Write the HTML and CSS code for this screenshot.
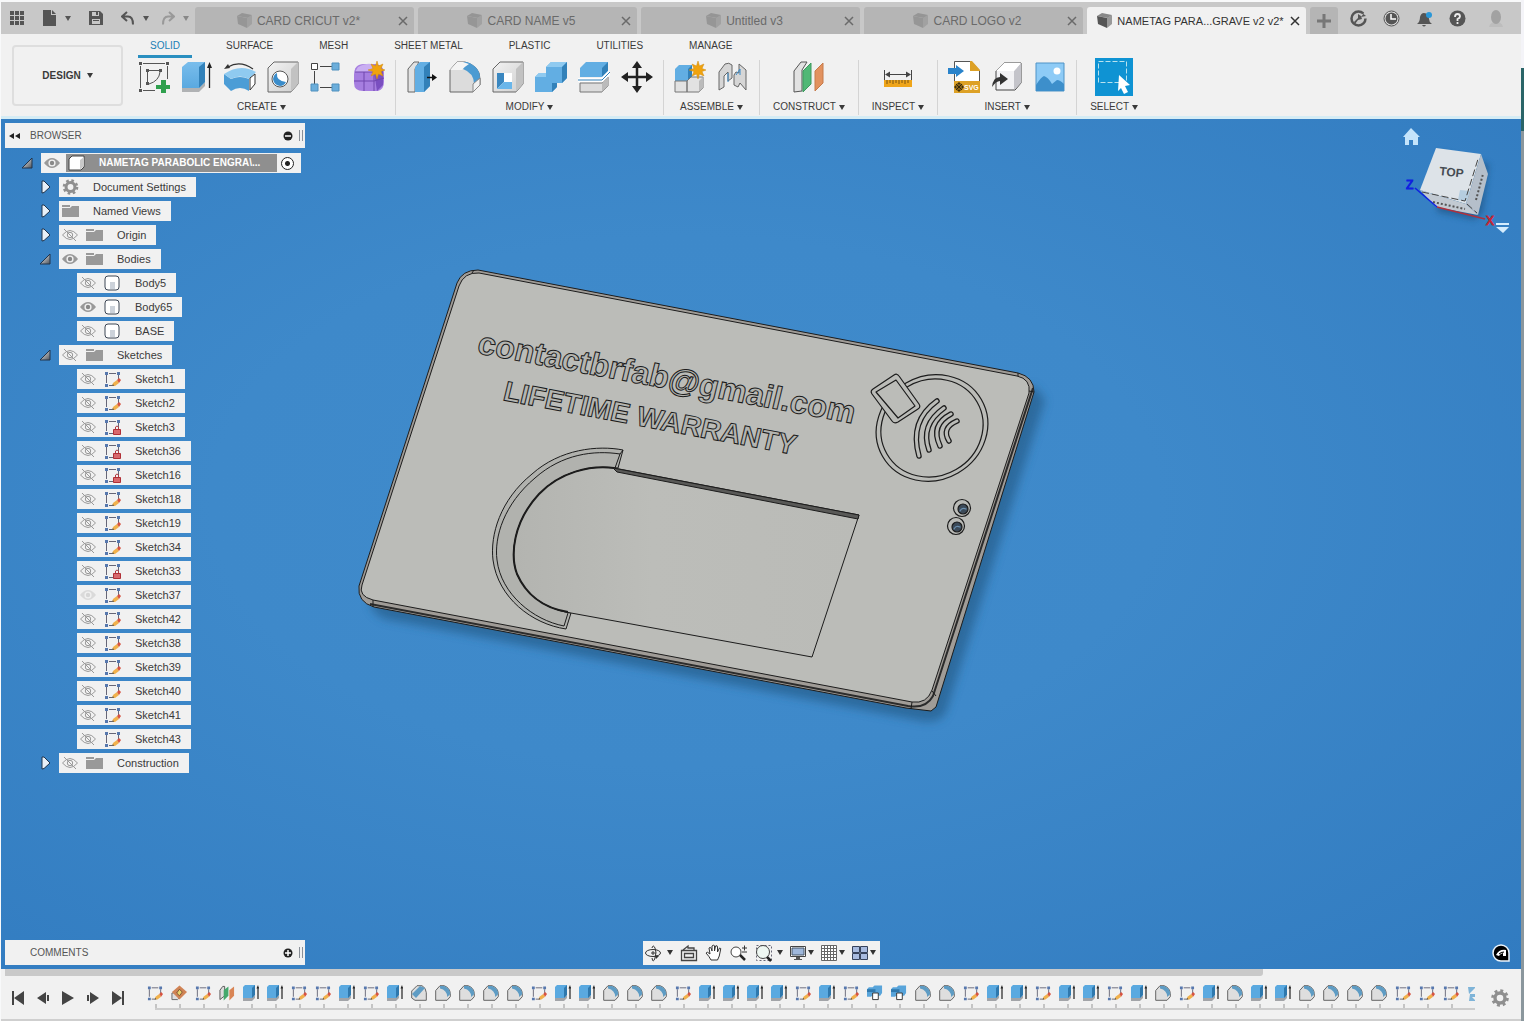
FILE: index.html
```html
<!DOCTYPE html>
<html lang="en">
<head>
<meta charset="utf-8">
<title>NAMETAG PARABOLIC ENGRAVE v2</title>
<link rel="stylesheet" href="styles.css">
</head>
<body>
<svg class="sprite" aria-hidden="true">
  <defs>
    <linearGradient id="steel" x1="0" y1="0" x2="1" y2="1"><stop offset="0" stop-color="#fff"/><stop offset="1" stop-color="#4a5058"/></linearGradient>
    <linearGradient id="blueFace" x1="0" y1="0" x2="0" y2="1"><stop offset="0" stop-color="#79bdec"/><stop offset="1" stop-color="#5aa9e0"/></linearGradient>
    <linearGradient id="grayFace" x1="0" y1="0" x2="1" y2="1"><stop offset="0" stop-color="#f2f2f2"/><stop offset="1" stop-color="#cfcfcf"/></linearGradient>
  </defs>
  <symbol id="cube" viewBox="0 0 16 16"><path d="M0 3 5 0l10 2-4 3z" fill="#888"/><path d="M0 3l10 2v10L1 11z" fill="currentColor"/><path d="M10 5l5-3v9l-5 4z" fill="#999"/></symbol>
  <symbol id="close" viewBox="0 0 10 10"><path d="M1 1l8 8M9 1 1 9" stroke="currentColor" stroke-width="1.5"/></symbol>
  <symbol id="caret" viewBox="0 0 6 5"><path d="M0 0h6L3 5z" fill="currentColor"/></symbol>
  <symbol id="eye" viewBox="0 0 16 14"><path d="M0 7Q8-3 16 7 8 17 0 7z" fill="#999"/><circle cx="8" cy="7" r="3.6" fill="#f1f1f1"/><circle cx="8" cy="7" r="2.2" fill="#888"/></symbol>
  <symbol id="eye-off" viewBox="0 0 16 14"><g fill="none" stroke="#999"><path d="M.5 7Q8-2 15.500 7 8 16 .5 7z"/><circle cx="8" cy="7" r="2.700"/><path d="M2 1l12 12"/></g></symbol>
  <symbol id="folder" viewBox="0 0 17 14"><path d="M0 1h8v2H0zM0 4h8l2-2h7v11H0z" fill="#999"/></symbol>
  <symbol id="gear" viewBox="0 0 18 18"><circle cx="9" cy="9" r="5" fill="none" stroke="#8f8f8f" stroke-width="3.4"/><circle cx="9" cy="9" r="7.300" fill="none" stroke="#8f8f8f" stroke-width="3" stroke-dasharray="2.870 2.870"/></symbol>
  <symbol id="body" viewBox="0 0 17 16"><path d="M1 4q0-3 3-3h8q3 0 3 3v8q0 3-3 3H4q-3 0-3-3z" fill="#fff" stroke="#3d4654"/><path d="M6 7h5v7H6z" fill="#ccd2da"/></symbol>
  <symbol id="comp" viewBox="0 0 17 16"><path d="M1 4l3-3h12v11l-3 3H1z" fill="#fff" stroke="#444"/><path d="M12 5v9h1l3-3V2z" fill="#c9c9c9"/></symbol>
  <symbol id="frame" viewBox="0 0 17 16"><path d="M2.500 4v8M5 2.500h7M14.500 4v5M5 14.500h4" stroke="#667" fill="none"/><path d="M1 1h3v3H1zM13 1h3v3h-3zM1 13h3v3H1z" fill="#5778ae"/></symbol>
  <symbol id="sketch" viewBox="0 0 17 16"><use href="#frame"/><path d="M8 15l1-3 4-3 2 3-4 3z" fill="#f1b14c"/><path d="M13 9l2-2 2 2-2 3z" fill="#d75340"/><path d="M8 15l1-2 1 2z" fill="#555"/></symbol>
  <symbol id="locked" viewBox="0 0 17 16"><use href="#frame"/><path d="M9.500 10.500h7v5h-7z" fill="#d8686c" stroke="#b02f36"/><path d="M11.500 10V8q1.500-2 3 0v2" fill="none" stroke="#b23a40"/></symbol>
  <symbol id="open" viewBox="0 0 12 12"><path d="M1 11 11 1v10z" fill="url(#steel)" stroke="#20344c"/></symbol>
  <symbol id="shut" viewBox="0 0 12 14"><path d="M3 1v12l2-.5L11 7 5 1z" fill="#e8f0f8" stroke="#20344c"/></symbol>

  <symbol id="t-extrude" viewBox="0 0 16 16"><path d="M0 12v4h9l3-3v-2z" fill="#a2a4a8"/><path d="M0 2l2-2h10v10l-3 3H0z" fill="#5aa9e0"/><path d="M9 3l3-3v10l-3 3z" fill="#2f78ad"/><path d="M15 14V2" stroke="#222" stroke-width="1.2"/><path d="M13.500 3.500 15 0l1 3.500z" fill="#222"/></symbol>
  <symbol id="t-fillet" viewBox="0 0 16 16"><path d="M.7 5.500 5 .7h4q6 2 6.300 8v3L12 15.300H.7z" fill="#dedede" stroke="#666"/><path d="M5 1h4q6 2 6.300 8l-3 3Q12 5 5 3.500z" fill="#5e9cc4"/></symbol>
  <symbol id="t-chamfer" viewBox="0 0 16 16"><path d="M.7 6 6 .7h5q4 2 4.300 7v7.600H4L.7 13z" fill="#dedede" stroke="#666"/><path d="M1 9 9 1l5 2-9 10z" fill="#5e9cc4"/></symbol>
  <symbol id="t-plane" viewBox="0 0 17 16"><path d="M1 5l3-4h2v10l-5 4z" fill="#ddd" stroke="#555"/><path d="M5 5l5-4v10l-5 5z" fill="#43a96b"/><path d="M11 5l5-4v10l-5 5z" fill="#d98555"/></symbol>
  <symbol id="t-decal" viewBox="0 0 17 16"><path d="M1 8v7h6l2-2-6-5z" fill="#ddd" stroke="#666"/><path d="M1 7 9 0l8 7-8 8z" fill="#d08355"/><path d="M6 8l3-4 3 3-3 4z" fill="#e8d26c" stroke="#7a5230"/></symbol>
  <symbol id="t-combine" viewBox="0 0 17 16"><path d="M0 4l2-2h4l2-2h8v8l-2 3H6L4 12H0z" fill="#58a4da"/><path d="M0 4h9v3H0z" fill="#2f78ad"/><path d="M6 8h6v7H6z" fill="#fff" stroke="#333"/></symbol>
  <symbol id="t-mirror" viewBox="0 0 16 16"><path d="M1 2h8L2 9zM3 9h6v3H5l4 4H2z" fill="#7fb4d8"/></symbol>

  <symbol id="i-sketch" viewBox="0 0 32 32"><g fill="none" stroke="#555"><path d="M2.500 5v22M5 2.500h22M29.500 5v13M5 29.500h12"/><path d="M9.500 11v10M11 9.500h10M22 11q-1 9-11 12"/></g><g fill="#555"><path d="M1 1h3v3H1zM28 1h3v3h-3zM1 28h3v3H1zM8 8h3v3H8zM21 8h3v3h-3zM8 21h3v3H8z"/></g><path d="M23 19h5v5h4v4h-4v4h-5v-4h-5v-4h5z" fill="#2fa04e"/></symbol>
  <symbol id="i-extrude" viewBox="0 0 32 32"><path d="M1 26v5h17l6-6v-4z" fill="#b0b2b4"/><path d="M1 24v3h17l6-6v-3z" fill="#f5f5f5"/><path d="M1 6l6-5h17v20l-6 6H1z" fill="url(#blueFace)"/><path d="M18 6l6-5v20l-6 6z" fill="#3281b9"/><path d="M28.500 27V4" stroke="#222" stroke-width="1.300"/><path d="M26 7l2.500-6L31 7z" fill="#222"/></symbol>
  <symbol id="i-revolve" viewBox="0 0 32 32"><path d="M0 13l7 5q9-4 18 0v12q-9-6-18 0l-7-7z" fill="#4c9dd6"/><path d="M0 13l7 5q9-5 18 0l7-7q-16-9-32 2z" fill="#8fcaf0"/><path d="M26 17l5-4v10l-5 6z" fill="#fff" stroke="#333"/><path d="M4 6q12-7 25 2" fill="none" stroke="#333" stroke-width="1.300"/><path d="M0 8l4-5 2 4z" fill="#333"/></symbol>
  <symbol id="i-hole" viewBox="0 0 32 32"><path d="M1 7l6-6h24v22l-7 8H1z" fill="url(#grayFace)" stroke="#666"/><path d="M24 8l7-7v22l-7 8z" fill="#c2c2c2"/><circle cx="13" cy="18" r="8" fill="#fff" stroke="#555"/><path d="M10 12q-1 8 9 9-2 4-6 4-6-1-7-7 1-5 4-6z" fill="#3a8cca"/></symbol>
  <symbol id="i-pattern" viewBox="0 0 32 32"><path d="M10 5.500h13M4.500 10v13M10 26.500h13" stroke="#444"/><path d="M1.500 2.500h6v6h-6z" fill="#fff" stroke="#444"/><path d="M22 2h7v7h-7zM1 23h7v7H1zM22 23h7v7h-7z" fill="#6caedb" stroke="#4e90be"/></symbol>
  <symbol id="i-form" viewBox="0 0 32 32"><path d="M1 14q0-11 10-11h12q8 2 8 9v9q0 7-6 9H10Q1 30 1 22z" fill="#a67ee0"/><path d="M5 6q14-7 18 1l-3 4H2z" fill="#c9aef2"/><path d="M21 11l9-2v15l-6 6z" fill="#7a4fc0"/><path d="M1 20h20l10-3M11 11v19M21 11v19M2 11h19" stroke="#7147ae" fill="none"/><use href="#star"/></symbol>
  <symbol id="star" viewBox="0 0 32 32"><path d="M24 0l1.500 5L30 3l-2 4.500 4 1.500-4 1.500 2 4.500-4.500-2L24 18l-1.500-5-4.500 2 2-4.500-5-1.500 5-1.500L18 3l4.500 2z" fill="#f0a30e" stroke="#cf8a10" stroke-width=".5"/></symbol>
  <symbol id="i-press" viewBox="0 0 32 32"><path d="M2 8l6-7h5L9 8v23H2z" fill="#e2e2e2" stroke="#666"/><path d="M9 6l5-5h10v24l-6 6H9z" fill="#62aee3"/><path d="M18 6l6-5v24l-6 6z" fill="#3281b9"/><path d="M21 16.500h7" stroke="#111" stroke-width="1.500"/><path d="M26 13l5 3.500-5 3.500z" fill="#111"/></symbol>
  <symbol id="i-fillet" viewBox="0 0 32 32"><path d="M1 9l7-8h8q15 4 15 17v6l-7 7H1z" fill="#dcdcdc" stroke="#666"/><path d="M14 1h4q13 5 13 16l-6 6Q25 12 14 8z" fill="#4c9bd2"/><path d="M24 23v8l7-7v-7z" fill="#f1f1f1" stroke="#888"/><path d="M1 9l7-8h6l6 2q-5 3-7 6z" fill="#f4f4f4"/></symbol>
  <symbol id="i-shell" viewBox="0 0 32 32"><path d="M1 8l7-7h23v22l-7 8H1z" fill="url(#grayFace)" stroke="#666"/><path d="M24 8l7-7v22l-7 8z" fill="#c2c2c2"/><path d="M5 12h15v16H5z" fill="#fff"/><path d="M5 12h7v9l-7 7z" fill="#3a87c0"/><path d="M5 28l7-7h8v7z" fill="#6ab6ea"/></symbol>
  <symbol id="i-combine" viewBox="0 0 32 32"><path d="M0 16l4-4h7V6l5-5h16v16l-5 5h-5v4l-5 5H0z" fill="#62aee3"/><path d="M11 6l5-5h16l-5 5zM0 16l4-4h7v4z" fill="#8fcaf0"/><path d="M27 6l5-5v16l-5 5zM17 22h5v4l-5 5z" fill="#3281b9"/></symbol>
  <symbol id="i-split" viewBox="0 0 32 32"><path d="M2 7l6-6h22v9l-6 6H2z" fill="#62aee3"/><path d="M24 7l6-6v9l-6 6z" fill="#3281b9"/><path d="M2 22h22l6-6v9l-6 6H2z" fill="#dcdcdc" stroke="#777"/><path d="M24 22l6-6v9l-6 6z" fill="#bbb"/><path d="M0 19h24l8-8" stroke="#fff" stroke-width="4" fill="none"/><path d="M0 19h24l8-8" stroke="#3281b9" fill="none"/></symbol>
  <symbol id="i-move" viewBox="0 0 32 32"><path d="M16 4v24M4 16h24" stroke="#222" stroke-width="2.500"/><path d="M16 0l5 7H11zM16 32l5-7H11zM0 16l7-5v10zM32 16l-7-5v10z" fill="#222"/></symbol>
  <symbol id="i-new" viewBox="0 0 32 32"><path d="M1 8l4-4h13v12l-4 4H1z" fill="#62aee3"/><path d="M14 8l4-4v12l-4 4z" fill="#3281b9"/><path d="M1 20h12v11H1zM13 20l4-4h12v11l-4 4H13z" fill="#e2e2e2" stroke="#777"/><path d="M25 20l4-4v11l-4 4z" fill="#bbb"/><use href="#star"/></symbol>
  <symbol id="i-joint" viewBox="0 0 32 32"><path d="M2 11 8 3q4-2 7 1v13l-4 3v-9l-4 4v11l-5 3z" fill="#d6d6d6" stroke="#666"/><path d="M29 9l-7-6v9l-3-1-2 3v10l4 2 2-4 6 7z" fill="#d6d6d6" stroke="#666"/><path d="M11 12v9M19 14l4-6v6" stroke="#3a8cca" fill="none"/></symbol>
  <symbol id="i-plane" viewBox="0 0 32 32"><path d="M1 10l7-9h6L9 9v21l-8 1z" fill="#e2e2e2" stroke="#555"/><path d="M10 10l8-8v21l-8 8z" fill="#51b876" stroke="#3c9a5e"/><path d="M22 10l8-8v20l-8 8z" fill="#e2925f" stroke="#c67b4b"/></symbol>
  <symbol id="i-measure" viewBox="0 0 32 32"><path d="M2 19h28v7H2z" fill="#efa51a"/><path d="M5 19v4M8 19v3M11 19v4M14 19v3M17 19v4M20 19v3M23 19v4M26 19v3" stroke="#7a5410"/><path d="M2.500 9v10M29.500 9v10M4 13.500h24" stroke="#444"/><path d="M3 13.500l5-3v6zM29 13.500l-5-3v6z" fill="#444"/></symbol>
  <symbol id="i-derive" viewBox="0 0 32 32"><path d="M5 10l8-8h17v20l-6 7H5z" fill="#f2f2f4" stroke="#444"/><path d="M23 10l7-8v20l-7 7z" fill="#c4c4ca"/><path d="M5 10l8-8h17l-7 8z" fill="#fff"/><path d="M1 26q1-10 8-10v-4l8 6-8 6v-4q-4 0-8 6z" fill="#333"/></symbol>
  <symbol id="i-image" viewBox="0 0 32 32"><path d="M2 2h28v28H2z" fill="#8ecbf6" stroke="#4f93c6"/><path d="M2 24q5-8 8-9 4 1 8 8l5-4q3 0 7 4v7H2z" fill="#3d8fcb"/><circle cx="23" cy="10" r="3.500" fill="#fff"/></symbol>
  <symbol id="i-select" viewBox="0 0 38 38"><path d="M0 0h38v38H0z" fill="#0f93d3"/><path d="M3.500 3.500h28v21h-28z" fill="none" stroke="#b9e2ee" stroke-dasharray="5 2"/><path d="M24 17l11 10-5 1 3 6-4 2-3-6-3 3z" fill="#fff"/></symbol>
</svg>

<div class="app">
  <header class="topbar">
    <nav class="quick" aria-label="Quick access">
      <button aria-label="Data panel"><svg width="14" height="14" viewBox="0 0 14 14"><path d="M0 0h4v4H0zM5 0h4v4H5zM10 0h4v4h-4zM0 5h4v4H0zM5 5h4v4H5zM10 5h4v4h-4zM0 10h4v4H0zM5 10h4v4H5zM10 10h4v4h-4z" fill="#555"/></svg></button>
      <button class="file" aria-label="File"><svg width="14" height="16" viewBox="0 0 14 16"><path d="M0 0h8v5h5v11H0z" fill="#555"/><path d="M9 0l4 4H9z" fill="#555"/></svg><svg class="caret"><use href="#caret"/></svg></button>
      <button class="save" aria-label="Save"><svg width="14" height="14" viewBox="0 0 14 14"><path d="M0 0h11l3 3v11H0z" fill="#555"/><path d="M3 1h7v4H3zM3 8h8v5H3z" fill="#c8c8c8"/><path d="M7 1h2v3H7zM4 9h6v1H4z" fill="#555"/></svg></button>
      <button class="undo" aria-label="Undo"><svg width="14" height="14" viewBox="0 0 14 14"><path d="M6 1 1 5.500 6 10M1 5.500h6q5 0 5 8" fill="none" stroke="#555" stroke-width="2"/></svg><svg class="caret"><use href="#caret"/></svg></button>
      <button class="redo" aria-label="Redo"><svg width="14" height="14" viewBox="0 0 14 14"><path d="M8 1l5 4.500L8 10M13 5.500H7q-5 0-5 8" fill="none" stroke="#999" stroke-width="2"/></svg><svg class="caret"><use href="#caret"/></svg></button>
    </nav>
    <div class="docs">
      <div class="doc"><button class="name"><svg class="cube"><use href="#cube"/></svg>CARD CRICUT v2*</button><button class="x" aria-label="Close"><svg><use href="#close"/></svg></button></div>
      <div class="doc"><button class="name"><svg class="cube"><use href="#cube"/></svg>CARD NAME v5</button><button class="x" aria-label="Close"><svg><use href="#close"/></svg></button></div>
      <div class="doc"><button class="name"><svg class="cube"><use href="#cube"/></svg>Untitled v3</button><button class="x" aria-label="Close"><svg><use href="#close"/></svg></button></div>
      <div class="doc"><button class="name"><svg class="cube"><use href="#cube"/></svg>CARD LOGO v2</button><button class="x" aria-label="Close"><svg><use href="#close"/></svg></button></div>
      <div class="doc current"><button class="name"><svg class="cube"><use href="#cube"/></svg>NAMETAG PARA...GRAVE v2 v2*</button><button class="x" aria-label="Close"><svg><use href="#close"/></svg></button></div>
      <button class="add" aria-label="New design"><svg width="14" height="14" viewBox="0 0 14 14"><path d="M7 0v14M0 7h14" stroke="#777" stroke-width="3"/></svg></button>
    </div>
    <div class="status">
      <button aria-label="Extensions"><svg width="17" height="17" viewBox="0 0 17 17"><circle cx="8.500" cy="8.500" r="7" fill="none" stroke="#555" stroke-width="2.500" stroke-dasharray="38 6"/><path d="M4 12l4-4V4l3 2 1 3-4 1-3 4zM11 2l3 1-3 4 5-1" fill="#555"/></svg></button>
      <button aria-label="Job status"><svg width="17" height="17" viewBox="0 0 17 17"><circle cx="8.500" cy="8.500" r="7.500" fill="#ddd" stroke="#555"/><circle cx="8.500" cy="8.500" r="6" fill="#555"/><path d="M8 4v5h5" fill="none" stroke="#fff" stroke-width="1.500"/></svg></button>
      <button aria-label="Notifications"><svg width="17" height="17" viewBox="0 0 17 17"><path d="M1 14q3-2 3-7 1-4 4-4 5 0 5 6 0 3 3 5zM6 15h4q-2 3-4 0z" fill="#555"/><circle cx="13" cy="5" r="3" fill="#2a97d8"/></svg></button>
      <button aria-label="Help"><svg width="17" height="17" viewBox="0 0 17 17"><circle cx="8.500" cy="8.500" r="8" fill="#555"/><path d="M6 7q0-3 2.500-3T11 6.500Q11 8 8.500 9v2M8.500 12v2" fill="none" stroke="#eee" stroke-width="1.800"/></svg></button>
      <button class="me" aria-label="Account"><svg width="17" height="17" viewBox="0 0 17 17"><path d="M1 17q1-5 7-5t7 5z" fill="#bdbdbd"/><ellipse cx="8" cy="7" rx="5" ry="7" fill="#a2a2a2"/></svg></button>
    </div>
  </header>

  <section class="ribbon">
    <button class="workspace">DESIGN <svg class="caret"><use href="#caret"/></svg></button>
    <div class="tools">
      <nav class="tabs">
        <a class="on" href="#solid">SOLID</a><a href="#surface">SURFACE</a><a href="#mesh">MESH</a><a href="#sheet">SHEET METAL</a><a href="#plastic">PLASTIC</a><a href="#utilities">UTILITIES</a><a href="#manage">MANAGE</a>
      </nav>
      <div class="groups">
        <div class="group">
          <div class="icons">
            <button aria-label="Create sketch"><svg><use href="#i-sketch"/></svg></button>
            <button aria-label="Extrude"><svg><use href="#i-extrude"/></svg></button>
            <button aria-label="Revolve"><svg><use href="#i-revolve"/></svg></button>
            <button aria-label="Hole"><svg><use href="#i-hole"/></svg></button>
            <button aria-label="Pattern"><svg><use href="#i-pattern"/></svg></button>
            <button aria-label="Create form"><svg><use href="#i-form"/></svg></button>
          </div>
          <button class="label">CREATE <svg class="caret"><use href="#caret"/></svg></button>
        </div>
        <div class="group">
          <div class="icons">
            <button aria-label="Press pull"><svg><use href="#i-press"/></svg></button>
            <button aria-label="Fillet"><svg><use href="#i-fillet"/></svg></button>
            <button aria-label="Shell"><svg><use href="#i-shell"/></svg></button>
            <button aria-label="Combine"><svg><use href="#i-combine"/></svg></button>
            <button aria-label="Split body"><svg><use href="#i-split"/></svg></button>
            <button aria-label="Move"><svg><use href="#i-move"/></svg></button>
          </div>
          <button class="label">MODIFY <svg class="caret"><use href="#caret"/></svg></button>
        </div>
        <div class="group">
          <div class="icons">
            <button aria-label="New component"><svg><use href="#i-new"/></svg></button>
            <button aria-label="Joint"><svg><use href="#i-joint"/></svg></button>
          </div>
          <button class="label">ASSEMBLE <svg class="caret"><use href="#caret"/></svg></button>
        </div>
        <div class="group">
          <div class="icons"><button aria-label="Offset plane"><svg><use href="#i-plane"/></svg></button></div>
          <button class="label">CONSTRUCT <svg class="caret"><use href="#caret"/></svg></button>
        </div>
        <div class="group">
          <div class="icons"><button aria-label="Measure"><svg><use href="#i-measure"/></svg></button></div>
          <button class="label">INSPECT <svg class="caret"><use href="#caret"/></svg></button>
        </div>
        <div class="group">
          <div class="icons">
            <button aria-label="Insert SVG"><svg viewBox="0 0 32 32"><path d="M6.500.5H23l8.500 9V31h-25z" fill="#fff" stroke="#555"/><path d="M22 0h2l8 9v1H22zM6 20h26v12H6z" fill="#dda126"/><path d="M0 7h8V4l8 6-8 6v-3H0z" fill="#2983cb"/><g fill="none" stroke="#33260a"><circle cx="11" cy="26" r="3.500"/><path d="M11 21v10M6 26h10M8 23l6 6M14 23l-6 6"/></g><text class="badge" x="16" y="29">SVG</text></svg></button>
            <button aria-label="Insert derive"><svg><use href="#i-derive"/></svg></button>
            <button aria-label="Canvas"><svg><use href="#i-image"/></svg></button>
          </div>
          <button class="label">INSERT <svg class="caret"><use href="#caret"/></svg></button>
        </div>
        <div class="group">
          <div class="icons"><button class="select" aria-label="Select"><svg><use href="#i-select"/></svg></button></div>
          <button class="label">SELECT <svg class="caret"><use href="#caret"/></svg></button>
        </div>
      </div>
    </div>
  </section>

  <main class="viewport">
    <svg class="scene" viewBox="1 119 1520 850" preserveAspectRatio="xMidYMid slice" role="img" aria-label="Name tag model">
      <defs>
        <filter id="soft" x="-10%" y="-10%" width="120%" height="120%"><feGaussianBlur stdDeviation="5"/></filter>
        <linearGradient id="pocket" x1="0" y1="0" x2="1" y2="0"><stop offset="0" stop-color="#b3b4b0"/><stop offset=".4" stop-color="#bcbdb9"/><stop offset="1" stop-color="#babbb7"/></linearGradient>
      </defs>
      <path d="M374 600 1034 386 1045 400 946 712Q940 724 922 721L385 619Q370 612 370 600z" fill="#28608f" opacity=".75" filter="url(#soft)"/>
      <g stroke="#1c1c1c" stroke-width="1" stroke-linejoin="round">
        <path d="M457 283Q462 270 478 270L1018 373Q1034 377 1034 392L936 707 931 711 906 708 374 607Q357 602 359 586z" fill="#a09c97"/>
        <path d="M370 604 908 706Q926 709 933 696L1033 388" fill="none" stroke="#2b2b2b" stroke-width="2"/>
        <path d="M459 286Q464 272 479 273L1017 376Q1031 379 1029 393L932 690Q927 704 912 702L373 600Q358 596 362 585z" fill="#bbbcb8"/>
        <path d="M1018 373v3M1029 391l5 1M912 702l-1 7M932 691l4 5M373 600v7M474 270l-2 3" fill="none"/>
        <path d="M623 450C598 445 560 449 532 474 500 500 490 535 493 560 498 598 532 624 566 629L571 613 812 657 859 515 618 468z" fill="#bbbcb8" stroke="none"/>
        <path d="M623 450C598 445 560 449 532 474 500 500 490 535 493 560 498 598 532 624 566 629L571 613C541 608 525 592 517 574 510 555 513 522 539 494 560 472 590 465 618 468z" fill="#b1b2ae"/>
        <path d="M620 454C594 450 562 454 535 478 504 504 494 537 497 560 501 594 533 620 564 626L568 613M620 454l-5 14M620 454l3-4" fill="none"/>
        <path d="M614 468C590 465 560 472 539 494 513 522 510 555 517 574 525 592 541 608 571 613L812 657 859 515z" fill="url(#pocket)"/>
        <path d="M614 468C590 465 560 472 539 494 513 522 510 555 517 574 525 592 541 608 568 612" fill="none" stroke-width="2"/>
        <path d="M613 468 859 515 858 519 617 472z" fill="#595957"/>
      </g>
      <g class="engraving">
        <text font-size="32" transform="translate(476 353) rotate(10.600) skewX(-3)">contactbrfab@gmail.com</text>
        <text font-size="28" transform="translate(502 400) rotate(10.600) skewX(-3)">LIFETIME WARRANTY</text>
      </g>
      <g fill="none" stroke="#1c1c1c" stroke-width="1.200" stroke-linejoin="round" stroke-linecap="round">
        <ellipse cx="932" cy="428" rx="57" ry="52" transform="rotate(-30 932 428)"/>
        <ellipse cx="932" cy="428" rx="52" ry="48" transform="rotate(-30 932 428)"/>
        <path d="M894 375q3-2 5 1l20 28q2 3-1 5l-20 13q-4 2-6-1l-20-27q-2-3 1-5z" fill="#bbbcb8"/>
        <path d="M896 380l19 26-17 12-22-26z"/>
        <g stroke-width="5.500"><path d="M937 401Q909 421 919 456M944 408Q920 425 929 450M951 414Q930 425 940 446M957 421Q941 428 949 441"/></g>
        <g stroke="#bbbcb8" stroke-width="3"><path d="M937 401Q909 421 919 456M944 408Q920 425 929 450M951 414Q930 425 940 446M957 421Q941 428 949 441"/></g>
        <circle cx="962" cy="508" r="8.500"/><circle cx="963" cy="509" r="5" fill="#3c4a58"/><path d="M960 511q2-4 6-2" stroke="#6a8faf"/>
        <circle cx="956" cy="526" r="8.500"/><circle cx="957" cy="527" r="5" fill="#3c4a58"/><path d="M954 529q2-4 6-2" stroke="#6a8faf"/>
      </g>
    </svg>

    <div class="overlay">
      <div class="upper">
        <aside class="side">
          <div class="panel">
            <button aria-label="Collapse"><svg width="12" height="8" viewBox="0 0 12 8"><path d="M0 4l5-3v6zM6 4l5-3v6z" fill="#222"/></svg></button>
            <span class="title">BROWSER</span>
            <button aria-label="Minimize"><svg width="10" height="10" viewBox="0 0 10 10"><circle cx="5" cy="5" r="4.500" fill="#222"/><path d="M2 5h6" stroke="#fff" stroke-width="1.500"/></svg></button>
            <i class="grip"></i>
          </div>
          <ul class="tree">
            <li><div class="row"><svg class="twist"><use href="#open"/></svg><div class="chip root"><svg class="e"><use href="#eye"/></svg><span class="rootname"><svg class="k"><use href="#comp"/></svg><span>NAMETAG PARABOLIC ENGRA\...</span></span><input type="radio" name="active" checked aria-label="Activate component"></div></div>
              <ul>
                <li><div class="row"><svg class="twist"><use href="#shut"/></svg><div class="chip"><svg class="k"><use href="#gear"/></svg><span>Document Settings</span></div></div></li>
                <li><div class="row"><svg class="twist"><use href="#shut"/></svg><div class="chip"><svg class="k"><use href="#folder"/></svg><span>Named Views</span></div></div></li>
                <li><div class="row"><svg class="twist"><use href="#shut"/></svg><div class="chip"><svg class="e"><use href="#eye-off"/></svg><svg class="k"><use href="#folder"/></svg><span>Origin</span></div></div></li>
                <li><div class="row"><svg class="twist"><use href="#open"/></svg><div class="chip"><svg class="e"><use href="#eye"/></svg><svg class="k"><use href="#folder"/></svg><span>Bodies</span></div></div>
                  <ul>
                    <li><div class="row leaf"><div class="chip"><svg class="e"><use href="#eye-off"/></svg><svg class="k"><use href="#body"/></svg><span>Body5</span></div></div></li>
                    <li><div class="row leaf"><div class="chip"><svg class="e"><use href="#eye"/></svg><svg class="k"><use href="#body"/></svg><span>Body65</span></div></div></li>
                    <li><div class="row leaf"><div class="chip"><svg class="e"><use href="#eye-off"/></svg><svg class="k"><use href="#body"/></svg><span>BASE</span></div></div></li>
                  </ul>
                </li>
                <li><div class="row"><svg class="twist"><use href="#open"/></svg><div class="chip"><svg class="e"><use href="#eye-off"/></svg><svg class="k"><use href="#folder"/></svg><span>Sketches</span></div></div>
                  <ul>
                    <li><div class="row leaf"><div class="chip"><svg class="e"><use href="#eye-off"/></svg><svg class="k"><use href="#sketch"/></svg><span>Sketch1</span></div></div></li>
                    <li><div class="row leaf"><div class="chip"><svg class="e"><use href="#eye-off"/></svg><svg class="k"><use href="#sketch"/></svg><span>Sketch2</span></div></div></li>
                    <li><div class="row leaf"><div class="chip"><svg class="e"><use href="#eye-off"/></svg><svg class="k"><use href="#locked"/></svg><span>Sketch3</span></div></div></li>
                    <li><div class="row leaf"><div class="chip"><svg class="e"><use href="#eye-off"/></svg><svg class="k"><use href="#locked"/></svg><span>Sketch36</span></div></div></li>
                    <li><div class="row leaf"><div class="chip"><svg class="e"><use href="#eye-off"/></svg><svg class="k"><use href="#locked"/></svg><span>Sketch16</span></div></div></li>
                    <li><div class="row leaf"><div class="chip"><svg class="e"><use href="#eye-off"/></svg><svg class="k"><use href="#sketch"/></svg><span>Sketch18</span></div></div></li>
                    <li><div class="row leaf"><div class="chip"><svg class="e"><use href="#eye-off"/></svg><svg class="k"><use href="#sketch"/></svg><span>Sketch19</span></div></div></li>
                    <li><div class="row leaf"><div class="chip"><svg class="e"><use href="#eye-off"/></svg><svg class="k"><use href="#sketch"/></svg><span>Sketch34</span></div></div></li>
                    <li><div class="row leaf"><div class="chip"><svg class="e"><use href="#eye-off"/></svg><svg class="k"><use href="#locked"/></svg><span>Sketch33</span></div></div></li>
                    <li><div class="row leaf"><div class="chip"><svg class="e dim"><use href="#eye"/></svg><svg class="k"><use href="#sketch"/></svg><span>Sketch37</span></div></div></li>
                    <li><div class="row leaf"><div class="chip"><svg class="e"><use href="#eye-off"/></svg><svg class="k"><use href="#sketch"/></svg><span>Sketch42</span></div></div></li>
                    <li><div class="row leaf"><div class="chip"><svg class="e"><use href="#eye-off"/></svg><svg class="k"><use href="#sketch"/></svg><span>Sketch38</span></div></div></li>
                    <li><div class="row leaf"><div class="chip"><svg class="e"><use href="#eye-off"/></svg><svg class="k"><use href="#sketch"/></svg><span>Sketch39</span></div></div></li>
                    <li><div class="row leaf"><div class="chip"><svg class="e"><use href="#eye-off"/></svg><svg class="k"><use href="#sketch"/></svg><span>Sketch40</span></div></div></li>
                    <li><div class="row leaf"><div class="chip"><svg class="e"><use href="#eye-off"/></svg><svg class="k"><use href="#sketch"/></svg><span>Sketch41</span></div></div></li>
                    <li><div class="row leaf"><div class="chip"><svg class="e"><use href="#eye-off"/></svg><svg class="k"><use href="#sketch"/></svg><span>Sketch43</span></div></div></li>
                  </ul>
                </li>
                <li><div class="row"><svg class="twist"><use href="#shut"/></svg><div class="chip"><svg class="e"><use href="#eye-off"/></svg><svg class="k"><use href="#folder"/></svg><span>Construction</span></div></div></li>
              </ul>
            </li>
          </ul>
        </aside>
        <svg class="viewcube" width="116" height="112" viewBox="1401 123 116 112" role="img" aria-label="View cube">
          <defs><filter id="cs" x="-20%" y="-20%" width="150%" height="150%"><feGaussianBlur stdDeviation="3"/></filter></defs>
          <path d="M1404 137l8-9 9 9h-2v8h-5v-5h-4v5h-4v-8z" fill="#c4e4fb"/>
          <path d="M1440 152l50 12-6 48-8 8-38-8z" fill="#1f4f7c" opacity=".6" filter="url(#cs)"/>
          <path d="M1437 148l45 6-15 50-46-14z" fill="#dde3e8"/>
          <path d="M1482 154l7 20-10 41-12-11z" fill="#b5bfca"/>
          <path d="M1421 190l46 14 12 11-42-8z" fill="#c2cad2"/>
          <path d="M1461 190l10 1-3 10-9-1z" fill="#b5cde0"/>
          <path d="M1423 192l43 9 13-42M1468 204l10 9" fill="none" stroke="#444" stroke-dasharray="7 3"/>
          <path d="M1434 202l32 7M1477 200l7-26" fill="none" stroke="#555" stroke-width="2" stroke-dasharray="2 2"/>
          <path d="M1416 188l22 19" stroke="#1020e0" stroke-width="1.500"/>
          <path d="M1438 207l48 12" stroke="#b0303c" stroke-width="1.500"/>
          <text x="1440" y="175" transform="rotate(6 1440 175)" class="cubetext">TOP</text>
          <text x="1407" y="189" class="axis z">Z</text>
          <text x="1487" y="225" class="axis xx">X</text>
          <path d="M1497 223h13v2h-13zM1497 227h13l-6 6z" fill="#d4ecfd"/>
        </svg>
      </div>
      <div class="lower">
        <div class="panel">
          <span class="title first">COMMENTS</span>
          <button aria-label="Add comment"><svg width="10" height="10" viewBox="0 0 10 10"><circle cx="5" cy="5" r="4.500" fill="#222"/><path d="M2 5h6M5 2v6" stroke="#fff" stroke-width="1.500"/></svg></button>
          <i class="grip"></i>
        </div>
        <div class="navbar">
          <button aria-label="Orbit"><svg width="18" height="18" viewBox="0 0 18 18"><g fill="none" stroke="#333"><ellipse cx="8" cy="9" rx="7.500" ry="3.500"/><path d="M7 4q1-4 3 0t0 10-3 0M8 7v4M6 9h5"/></g><path d="M10 11l4 1-3 3z" fill="#333"/></svg><svg class="caret"><use href="#caret"/></svg></button>
          <button aria-label="Look at"><svg width="18" height="18" viewBox="0 0 18 18"><path d="M1.500 6.500h15v10h-15zM4.500 9.500h9v4h-9zM3 6l5-4v2h6v2" fill="none" stroke="#444" stroke-width="1.300"/></svg></button>
          <button aria-label="Pan"><svg width="18" height="18" viewBox="0 0 18 18"><path d="M6 16q-2-4-5-7 1-2 4 1L4 4q2-2 3 3V2q2-2 2.500 0v5l1-5q2-1 2 1v5l2-4q2 0 1 2-1 7-3 10z" fill="#fff" stroke="#333"/></svg></button>
          <button aria-label="Zoom"><svg width="18" height="18" viewBox="0 0 18 18"><circle cx="6" cy="8" r="5" fill="#fff" stroke="#444"/><path d="M10 11l5 5" stroke="#222" stroke-width="2.500"/><path d="M12 4h5M14.500 1.500v5M12 8h5" stroke="#333"/></svg></button>
          <button aria-label="Fit"><svg width="18" height="18" viewBox="0 0 18 18"><path d="M1.500 1.500h15v15h-15z" fill="none" stroke="#667" stroke-dasharray="2 2"/><circle cx="8" cy="8" r="6.500" fill="#eef7f2" stroke="#444"/><path d="M12 13l4 4" stroke="#222" stroke-width="2.500"/></svg><svg class="caret"><use href="#caret"/></svg></button>
          <button class="tight" aria-label="Display settings"><svg width="16" height="16" viewBox="0 0 16 16"><path d="M.5 1.500h15v10H.5z" fill="#fff" stroke="#444"/><path d="M2 3h12v7H2z" fill="#9fb8dc" stroke="#456"/><path d="M6 12h4v2h2v1H4v-1h2z" fill="#555"/></svg><svg class="caret"><use href="#caret"/></svg></button>
          <button class="tight" aria-label="Grid settings"><svg width="16" height="16" viewBox="0 0 16 16"><path d="M.5.5h15v15H.5zM3.500 0v16M6.500 0v16M9.500 0v16M12.500 0v16M0 3.500h16M0 6.500h16M0 9.500h16M0 12.500h16" fill="#fff" stroke="#666"/></svg><svg class="caret"><use href="#caret"/></svg></button>
          <button class="tight" aria-label="Viewports"><svg width="16" height="16" viewBox="0 0 16 16"><path d="M.5 1.500h7v6h-7zM8.500 1.500h7v6h-7zM.5 8.500h7v6h-7zM8.500 8.500h7v6h-7z" fill="#a8bbe0" stroke="#36425c"/></svg><svg class="caret"><use href="#caret"/></svg></button>
        </div>
        <button class="assist" aria-label="Assistant"><svg width="18" height="18" viewBox="0 0 18 18"><path d="M1 9a8 8 0 0 1 16 0v8H9a8 8 0 0 1-8-8z" fill="#000" stroke="#eaf4fc" stroke-width="1.500"/><path d="M4 11q3-6 10-5v6h-3V9q-3 1-4 3z" fill="#fff"/><path d="M7 10q2-2 5-2" stroke="#000"/></svg></button>
      </div>
    </div>
  </main>

  <footer class="bottom">
    <div class="scroll"><i></i></div>
    <div class="timeline">
      <div class="play">
        <button aria-label="Go to start"><svg width="14" height="14" viewBox="0 0 14 14"><path d="M1 0h2v14H1zM13 0v14L3 7z" fill="#444"/></svg></button>
        <button aria-label="Step back"><svg width="14" height="14" viewBox="0 0 14 14"><path d="M10 1v12L1 7zM11 4h2v6h-2z" fill="#444"/></svg></button>
        <button aria-label="Play"><svg width="14" height="14" viewBox="0 0 14 14"><path d="M1 0v14l12-7z" fill="#444"/></svg></button>
        <button aria-label="Step forward"><svg width="14" height="14" viewBox="0 0 14 14"><path d="M4 1v12l9-6zM1 4h2v6H1z" fill="#444"/></svg></button>
        <button aria-label="Go to end"><svg width="14" height="14" viewBox="0 0 14 14"><path d="M11 0h2v14h-2zM1 0v14l10-7z" fill="#444"/></svg></button>
      </div>
      <div class="history">
        <div class="steps">
          <svg><use href="#sketch"/></svg><svg><use href="#t-decal"/></svg><svg><use href="#sketch"/></svg><svg><use href="#t-plane"/></svg><svg><use href="#t-extrude"/></svg><svg><use href="#t-extrude"/></svg><svg><use href="#sketch"/></svg><svg><use href="#sketch"/></svg>
          <svg><use href="#t-extrude"/></svg><svg><use href="#sketch"/></svg><svg><use href="#t-extrude"/></svg><svg><use href="#t-chamfer"/></svg><svg><use href="#t-fillet"/></svg><svg><use href="#t-fillet"/></svg><svg><use href="#t-fillet"/></svg><svg><use href="#t-fillet"/></svg>
          <svg><use href="#sketch"/></svg><svg><use href="#t-extrude"/></svg><svg><use href="#t-extrude"/></svg><svg><use href="#t-fillet"/></svg><svg><use href="#t-fillet"/></svg><svg><use href="#t-fillet"/></svg><svg><use href="#sketch"/></svg><svg><use href="#t-extrude"/></svg>
          <svg><use href="#t-extrude"/></svg><svg><use href="#t-extrude"/></svg><svg><use href="#t-extrude"/></svg><svg><use href="#sketch"/></svg><svg><use href="#t-extrude"/></svg><svg><use href="#sketch"/></svg><svg><use href="#t-combine"/></svg><svg><use href="#t-combine"/></svg>
          <svg><use href="#t-fillet"/></svg><svg><use href="#t-fillet"/></svg><svg><use href="#sketch"/></svg><svg><use href="#t-extrude"/></svg><svg><use href="#t-extrude"/></svg><svg><use href="#sketch"/></svg><svg><use href="#t-extrude"/></svg><svg><use href="#t-extrude"/></svg>
          <svg><use href="#sketch"/></svg><svg><use href="#t-extrude"/></svg><svg><use href="#t-fillet"/></svg><svg><use href="#sketch"/></svg><svg><use href="#t-extrude"/></svg><svg><use href="#t-fillet"/></svg><svg><use href="#t-extrude"/></svg><svg><use href="#t-extrude"/></svg>
          <svg><use href="#t-fillet"/></svg><svg><use href="#t-fillet"/></svg><svg><use href="#t-fillet"/></svg><svg><use href="#t-fillet"/></svg><svg><use href="#sketch"/></svg><svg><use href="#sketch"/></svg><svg><use href="#sketch"/></svg><svg><use href="#t-mirror"/></svg>
        </div>
        <div class="track"></div>
      </div>
      <button class="settings" aria-label="Timeline settings"><svg width="18" height="18"><use href="#gear"/></svg></button>
    </div>
  </footer>
</div>
</body>
</html>
```
FILE: styles.css
```css
* { box-sizing: border-box; }
body {
  margin: 0;
  font: 11px/16px "Liberation Sans", Arial, sans-serif;
  color: #3a3a3a;
  background: linear-gradient(#f4f4f8 68px, #2a6568 68px, #2a6568 131px, #8b979d 131px);
}
button {
  display: inline-flex;
  align-items: center;
  justify-content: center;
  padding: 0;
  border: 0;
  background: none;
  color: inherit;
  font: inherit;
}
svg { display: block; flex: none; }
ul { margin: 0; padding: 0; list-style: none; }
a { color: inherit; text-decoration: none; }
.sprite { position: absolute; width: 0; height: 0; }
.caret { width: 6px; height: 5px; }

.app {
  display: grid;
  grid-template-columns: minmax(0, 1fr);
  grid-template-rows: auto auto 1fr auto;
  min-height: 100vh;
  margin-right: 3px;
  padding: 2px 0 0 1px;
  background: #f8f9fa;
}

/* document bar */
.topbar { display: flex; align-items: flex-end; height: 32px; background: #c8c8c8; }
.quick { display: flex; align-items: center; height: 32px; width: 194px; padding-left: 9px; color: #555; }
.quick button { gap: 8px; }
.quick .file { margin-left: 19px; }
.quick .save { margin-left: 18px; }
.quick .undo { margin-left: 18px; }
.quick .redo { margin-left: 12px; color: #888; }
.docs { display: flex; flex: 1; gap: 4px; min-width: 0; }
.doc {
  display: flex;
  flex: 0 1 219px;
  min-width: 0;
  height: 27px;
  padding: 0 6px 0 4px;
  background: #b5b5b5;
  border-radius: 3px 3px 0 0;
  color: #6a6a6a;
}
.doc .name { flex: 1; gap: 4px; font-size: 12px; white-space: nowrap; }
.doc .cube { width: 16px; height: 16px; color: #8a8a8a; opacity: .7; }
.doc .x svg { width: 10px; height: 10px; }
.doc.current { background: #f1f1f1; color: #333; }
.doc.current .name { font-size: 11px; }
.doc.current .cube { color: #555; opacity: 1; }
.add { width: 28px; height: 27px; background: #b5b5b5; border-radius: 3px 3px 0 0; }
.status { display: flex; align-items: center; gap: 16px; height: 32px; padding-right: 16px; }
.status .me { margin-left: 6px; }

/* ribbon */
.ribbon {
  display: flex;
  gap: 15px;
  height: 85px;
  padding: 2px 0 0 11px;
  background: #f1f1f1;
  border-bottom: 3px solid #d5ecf5;
}
.workspace {
  gap: 6px;
  width: 111px;
  height: 61px;
  margin-top: 9px;
  border: 2px solid #dedede;
  border-radius: 4px;
  font-weight: 700;
  font-size: 10px;
}
.tabs { display: flex; gap: 22px; height: 22px; font-size: 10px; line-height: 19px; }
.tabs a { padding: 0 12px; white-space: nowrap; }
.tabs .on { color: #1a7fb5; border-bottom: 3px solid #2a8fc0; }
.groups { display: flex; }
.group {
  display: flex;
  flex-direction: column;
  align-items: center;
  height: 55px;
  margin-top: 2px;
  padding: 0 10px;
  border-right: 1px solid #d4d4d4;
}
.group:first-child { padding-left: 0; }
.group:last-child { border: 0; }
.icons { display: flex; flex: none; align-items: center; gap: 11px; height: 34px; }
.icons svg { width: 32px; height: 32px; }
.icons .select svg { width: 38px; height: 38px; }
.badge { font: 700 7px "Liberation Sans", Arial, sans-serif; fill: #fff; }
.label { gap: 3px; flex: none; margin-top: 5px; padding: 0 3px; height: 16px; font-size: 10px; white-space: nowrap; }

/* viewport */
.viewport {
  display: grid;
  min-height: 0;
  background: radial-gradient(ellipse at 45% 45%, #408bcb 0, #3e89ca 40%, #317bc0 100%);
}
.scene, .overlay { grid-area: 1 / 1; }
.scene { width: 100%; height: 100%; min-height: 0; contain: size; }
.engraving {
  fill: #b4b5b1;
  stroke: #1c1c1c;
  stroke-width: 1;
  font-family: "Liberation Sans", Arial, sans-serif;
  font-weight: 700;
}
.overlay { display: flex; flex-direction: column; justify-content: space-between; padding: 4px 4px; }
.upper { display: flex; justify-content: space-between; align-items: flex-start; }
.panel {
  display: flex;
  align-items: center;
  width: 300px;
  height: 25px;
  padding: 0 2px 0 4px;
  background: #f1f1f1;
  color: #555;
  font-size: 10px;
}
.panel .title { flex: 1; margin-left: 9px; }
.panel .title.first { margin-left: 21px; }
.grip { width: 4px; height: 11px; margin-left: 6px; border: solid #8a9098; border-width: 0 1px; }

.tree { padding: 5px 0 0 16px; }
.tree ul { padding-left: 18px; }
.row { display: flex; align-items: center; height: 20px; margin-bottom: 4px; }
.leaf { padding-left: 20px; }
.twist { width: 12px; height: 14px; margin-right: 8px; }
.chip { display: flex; align-items: center; height: 20px; padding: 0 10px 0 3px; background: #f1f1f1; white-space: nowrap; }
.e { width: 16px; height: 14px; margin-right: 8px; }
.dim { opacity: .25; }
.k { width: 17px; height: 16px; margin-right: 14px; }
.root { width: 260px; padding-right: 7px; }
.root .e { margin-right: 6px; }
.rootname { display: flex; flex: 1; align-items: center; height: 18px; padding-left: 2px; background: #8f8f8f; color: #fff; font-weight: 700; font-size: 10px; }
.root input {
  appearance: none;
  width: 13px;
  height: 13px;
  margin: 0 0 0 4px;
  border: 1px solid #222;
  border-radius: 50%;
  background: radial-gradient(circle, #222 2px, #fff 3px);
}
.viewcube { margin-right: 1px; }
.cubetext { font: 700 12px "Liberation Sans", Arial, sans-serif; fill: #454b52; }
.axis { font: 12px "Liberation Sans", Arial, sans-serif; }
.axis.z { fill: #1020e0; stroke: #1020e0; }
.axis.xx { fill: #c02838; stroke: #c02838; }

.lower { display: grid; grid-template-columns: 1fr auto 1fr; align-items: center; }
.navbar { display: flex; align-items: center; gap: 7px; height: 24px; padding: 0 4px 0 2px; background: #f1f1f1; color: #333; }
.navbar button { gap: 4px; }
.navbar .tight { gap: 2px; }
.assist { justify-self: end; margin-right: 7px; }

/* timeline */
.bottom { height: 52px; background: #f1f1f1; border-bottom: 2px solid #cfcfcf; }
.scroll { height: 7px; padding-left: 4px; }
.scroll i { display: block; width: 83%; height: 7px; background: #c9c9c9; border-radius: 0 0 3px 0; }
.timeline { display: flex; align-items: flex-start; padding-top: 9px; }
.play { display: flex; gap: 11px; padding: 6px 18px 0 10px; }
.history { flex: 1; min-width: 0; margin-right: 4px; overflow: hidden; }
.steps { display: flex; gap: 8px; padding-left: 4px; }
.steps svg { width: 16px; height: 16px; }
.track {
  height: 6px;
  margin: 3px 0 0 12px;
  border-bottom: 2px solid #cdcdcd;
  background: repeating-linear-gradient(90deg, #c4c4c4 0 2px, transparent 2px 24px);
}
.settings { margin: 4px 12px 0; }
```
